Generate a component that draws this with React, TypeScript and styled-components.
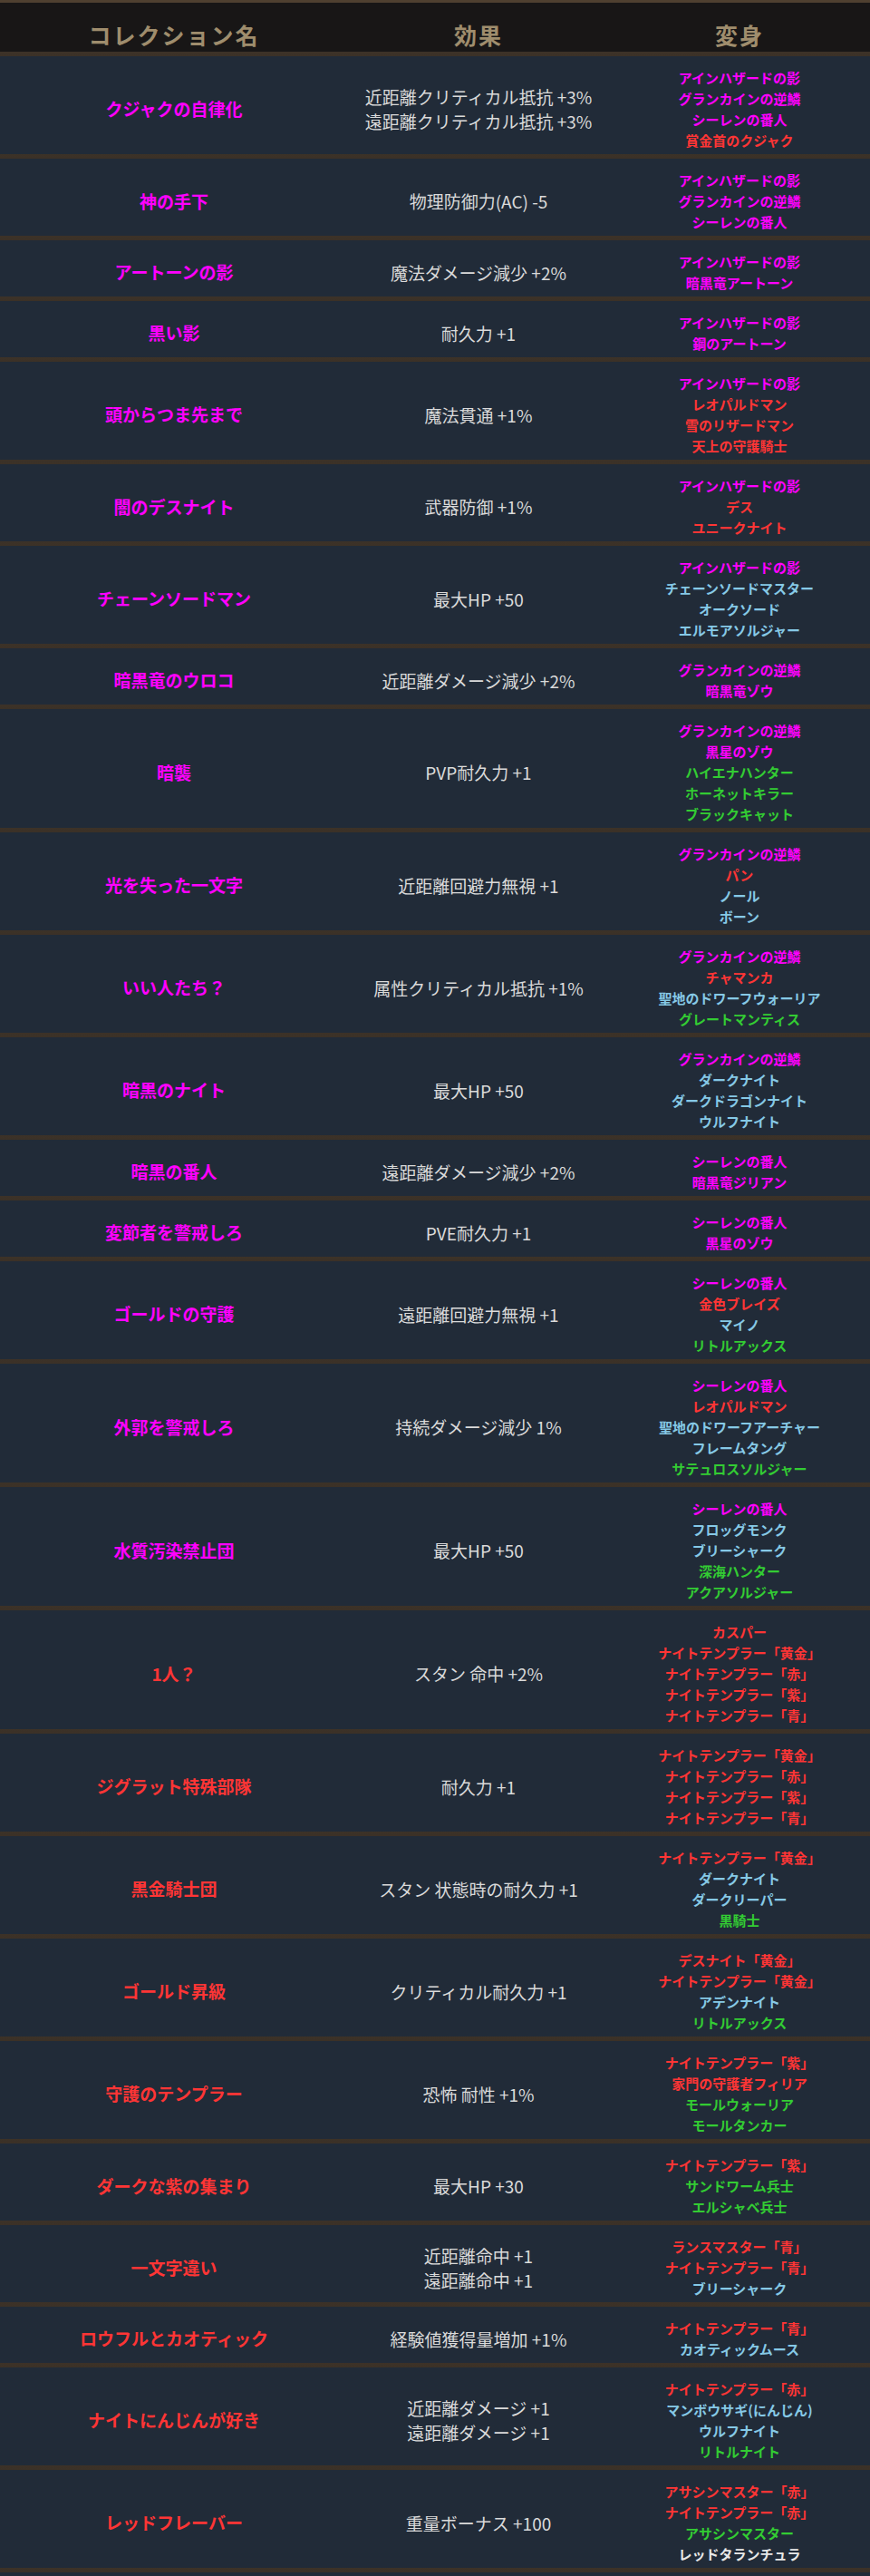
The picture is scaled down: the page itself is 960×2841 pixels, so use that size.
import type { FC } from "react";
import styled, { createGlobalStyle, css } from "styled-components";

type Tone = "m" | "r" | "b" | "g" | "w";

const tones: Record<Tone, string> = {
  m: "#ff00ff",
  r: "#ff3535",
  b: "#86c9e6",
  g: "#33cc33",
  w: "#e8e8e8",
};

type Collection = {
  name: string;
  tone: Tone;
  effects: string[];
  forms: [string, Tone][];
};

const rows: Collection[] = [
  {
    name: "クジャクの自律化",
    tone: "m",
    effects: ["近距離クリティカル抵抗 +3%", "遠距離クリティカル抵抗 +3%"],
    forms: [["アインハザードの影", "m"], ["グランカインの逆鱗", "m"], ["シーレンの番人", "m"], ["賞金首のクジャク", "r"]],
  },
  {
    name: "神の手下",
    tone: "m",
    effects: ["物理防御力(AC) -5"],
    forms: [["アインハザードの影", "m"], ["グランカインの逆鱗", "m"], ["シーレンの番人", "m"]],
  },
  {
    name: "アートーンの影",
    tone: "m",
    effects: ["魔法ダメージ減少 +2%"],
    forms: [["アインハザードの影", "m"], ["暗黒竜アートーン", "m"]],
  },
  {
    name: "黒い影",
    tone: "m",
    effects: ["耐久力 +1"],
    forms: [["アインハザードの影", "m"], ["鋼のアートーン", "m"]],
  },
  {
    name: "頭からつま先まで",
    tone: "m",
    effects: ["魔法貫通 +1%"],
    forms: [["アインハザードの影", "m"], ["レオパルドマン", "r"], ["雪のリザードマン", "r"], ["天上の守護騎士", "r"]],
  },
  {
    name: "闇のデスナイト",
    tone: "m",
    effects: ["武器防御 +1%"],
    forms: [["アインハザードの影", "m"], ["デス", "r"], ["ユニークナイト", "r"]],
  },
  {
    name: "チェーンソードマン",
    tone: "m",
    effects: ["最大HP +50"],
    forms: [["アインハザードの影", "m"], ["チェーンソードマスター", "b"], ["オークソード", "b"], ["エルモアソルジャー", "b"]],
  },
  {
    name: "暗黒竜のウロコ",
    tone: "m",
    effects: ["近距離ダメージ減少 +2%"],
    forms: [["グランカインの逆鱗", "m"], ["暗黒竜ゾウ", "m"]],
  },
  {
    name: "暗襲",
    tone: "m",
    effects: ["PVP耐久力 +1"],
    forms: [["グランカインの逆鱗", "m"], ["黒星のゾウ", "m"], ["ハイエナハンター", "g"], ["ホーネットキラー", "g"], ["ブラックキャット", "g"]],
  },
  {
    name: "光を失った一文字",
    tone: "m",
    effects: ["近距離回避力無視 +1"],
    forms: [["グランカインの逆鱗", "m"], ["パン", "r"], ["ノール", "b"], ["ボーン", "b"]],
  },
  {
    name: "いい人たち？",
    tone: "m",
    effects: ["属性クリティカル抵抗 +1%"],
    forms: [["グランカインの逆鱗", "m"], ["チャマンカ", "r"], ["聖地のドワーフウォーリア", "b"], ["グレートマンティス", "g"]],
  },
  {
    name: "暗黒のナイト",
    tone: "m",
    effects: ["最大HP +50"],
    forms: [["グランカインの逆鱗", "m"], ["ダークナイト", "b"], ["ダークドラゴンナイト", "b"], ["ウルフナイト", "b"]],
  },
  {
    name: "暗黒の番人",
    tone: "m",
    effects: ["遠距離ダメージ減少 +2%"],
    forms: [["シーレンの番人", "m"], ["暗黒竜ジリアン", "m"]],
  },
  {
    name: "変節者を警戒しろ",
    tone: "m",
    effects: ["PVE耐久力 +1"],
    forms: [["シーレンの番人", "m"], ["黒星のゾウ", "m"]],
  },
  {
    name: "ゴールドの守護",
    tone: "m",
    effects: ["遠距離回避力無視 +1"],
    forms: [["シーレンの番人", "m"], ["金色ブレイズ", "r"], ["マイノ", "b"], ["リトルアックス", "g"]],
  },
  {
    name: "外郭を警戒しろ",
    tone: "m",
    effects: ["持続ダメージ減少 1%"],
    forms: [["シーレンの番人", "m"], ["レオパルドマン", "r"], ["聖地のドワーフアーチャー", "b"], ["フレームタング", "b"], ["サテュロスソルジャー", "g"]],
  },
  {
    name: "水質汚染禁止団",
    tone: "m",
    effects: ["最大HP +50"],
    forms: [["シーレンの番人", "m"], ["フロッグモンク", "b"], ["ブリーシャーク", "b"], ["深海ハンター", "g"], ["アクアソルジャー", "g"]],
  },
  {
    name: "1人？",
    tone: "r",
    effects: ["スタン 命中 +2%"],
    forms: [["カスパー", "r"], ["ナイトテンプラー「黄金」", "r"], ["ナイトテンプラー「赤」", "r"], ["ナイトテンプラー「紫」", "r"], ["ナイトテンプラー「青」", "r"]],
  },
  {
    name: "ジグラット特殊部隊",
    tone: "r",
    effects: ["耐久力 +1"],
    forms: [["ナイトテンプラー「黄金」", "r"], ["ナイトテンプラー「赤」", "r"], ["ナイトテンプラー「紫」", "r"], ["ナイトテンプラー「青」", "r"]],
  },
  {
    name: "黒金騎士団",
    tone: "r",
    effects: ["スタン 状態時の耐久力 +1"],
    forms: [["ナイトテンプラー「黄金」", "r"], ["ダークナイト", "b"], ["ダークリーパー", "b"], ["黒騎士", "g"]],
  },
  {
    name: "ゴールド昇級",
    tone: "r",
    effects: ["クリティカル耐久力 +1"],
    forms: [["デスナイト「黄金」", "r"], ["ナイトテンプラー「黄金」", "r"], ["アデンナイト", "b"], ["リトルアックス", "g"]],
  },
  {
    name: "守護のテンプラー",
    tone: "r",
    effects: ["恐怖 耐性 +1%"],
    forms: [["ナイトテンプラー「紫」", "r"], ["家門の守護者フィリア", "r"], ["モールウォーリア", "g"], ["モールタンカー", "g"]],
  },
  {
    name: "ダークな紫の集まり",
    tone: "r",
    effects: ["最大HP +30"],
    forms: [["ナイトテンプラー「紫」", "r"], ["サンドワーム兵士", "g"], ["エルシャベ兵士", "g"]],
  },
  {
    name: "一文字違い",
    tone: "r",
    effects: ["近距離命中 +1", "遠距離命中 +1"],
    forms: [["ランスマスター「青」", "r"], ["ナイトテンプラー「青」", "r"], ["ブリーシャーク", "b"]],
  },
  {
    name: "ロウフルとカオティック",
    tone: "r",
    effects: ["経験値獲得量増加 +1%"],
    forms: [["ナイトテンプラー「青」", "r"], ["カオティックムース", "b"]],
  },
  {
    name: "ナイトにんじんが好き",
    tone: "r",
    effects: ["近距離ダメージ +1", "遠距離ダメージ +1"],
    forms: [["ナイトテンプラー「赤」", "r"], ["マンボウサギ(にんじん)", "b"], ["ウルフナイト", "b"], ["リトルナイト", "g"]],
  },
  {
    name: "レッドフレーバー",
    tone: "r",
    effects: ["重量ボーナス +100"],
    forms: [["アサシンマスター「赤」", "r"], ["ナイトテンプラー「赤」", "r"], ["アサシンマスター", "g"], ["レッドタランチュラ", "w"]],
  },
];

const GlobalStyle = createGlobalStyle`
  html, body {
    margin: 0;
    padding: 0;
    background: #212b38;
  }

  body {
    font-family: "Noto Sans CJK JP", "Noto Sans", sans-serif;
  }
`;

const divider = css`
  border-bottom: 5px solid #5a4936;
  border-image: linear-gradient(
      to bottom,
      #3b3127 0%,
      #6a5741 35%,
      #5c4a37 65%,
      #3b3127 100%
    )
    1;
`;

const Table = styled.section`
  width: 960px;
  border-top: 3px solid #4f4030;
`;

const columns = css`
  display: grid;
  grid-template-columns: 384px 288px 288px;
  align-items: center;
  text-align: center;
`;

const HeaderRow = styled.header`
  ${columns}
  ${divider}
  background: #181616;
  padding: 20px 0 4px;
`;

const HeadCell = styled.div`
  font-size: 25px;
  line-height: 30px;
  font-weight: 700;
  letter-spacing: 2px;
  color: #9f8d6d;
`;

const Row = styled.div`
  ${columns}
  ${divider}
  background: #212b38;
  padding: 12px 0 4px;
`;

const Name = styled.div<{ $tone: Tone }>`
  font-size: 19px;
  line-height: 26px;
  font-weight: 700;
  color: ${({ $tone }) => tones[$tone]};
`;

const Effects = styled.div`
  display: flex;
  flex-direction: column;
  font-size: 19px;
  line-height: 27px;
  font-weight: 400;
  color: #dadada;
`;

const Forms = styled.ul`
  list-style: none;
  margin: 0;
  padding: 0;
`;

const Form = styled.li<{ $tone: Tone }>`
  font-size: 15px;
  line-height: 23px;
  font-weight: 700;
  white-space: nowrap;
  color: ${({ $tone }) => tones[$tone]};
`;

const App: FC = () => {
  return (
    <>
      <GlobalStyle />
      <Table>
        <HeaderRow>
          <HeadCell>コレクション名</HeadCell>
          <HeadCell>効果</HeadCell>
          <HeadCell>変身</HeadCell>
        </HeaderRow>

        {rows.map((row) => (
          <Row key={row.name}>
            <Name $tone={row.tone}>{row.name}</Name>
            <Effects>
              {row.effects.map((effect) => (
                <span key={effect}>{effect}</span>
              ))}
            </Effects>
            <Forms>
              {row.forms.map(([form, tone], i) => (
                <Form key={i} $tone={tone}>
                  {form}
                </Form>
              ))}
            </Forms>
          </Row>
        ))}
      </Table>
    </>
  );
};

export default App;
